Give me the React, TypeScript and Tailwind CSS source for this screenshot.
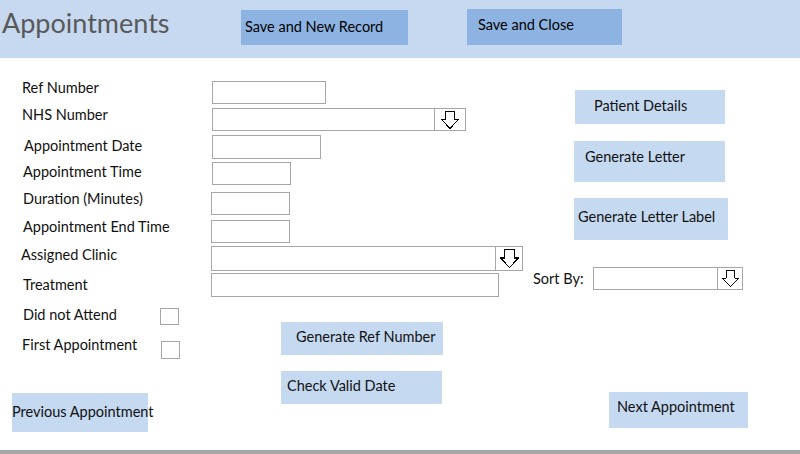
import React from 'react';

function Arrow({ size }: { size: number }) {
  return (
    <svg width={size} height={size} viewBox="0 0 18 18" className="block">
      <polygon
        points="4.5,0.5 13.5,0.5 13.5,8.5 17.5,8.5 9,17.5 0.5,8.5 4.5,8.5"
        fill="white"
        stroke="black"
        strokeWidth="1"
        shapeRendering="crispEdges"
      />
    </svg>
  );
}

function Field({ className }: { className: string }) {
  return <div className={'border border-[#a6a6a6] bg-white ' + className} />;
}

function Combo({ className, arrowBox, arrowSize }: { className: string; arrowBox: string; arrowSize: number }) {
  return (
    <div className={'flex border border-[#a6a6a6] bg-white ' + className}>
      <div className="flex-1" />
      <div className={'flex items-center justify-center border-l border-[#a6a6a6] ' + arrowBox}>
        <Arrow size={arrowSize} />
      </div>
    </div>
  );
}

export default function App() {
  return (
    <div className="flex h-[454px] w-[800px] flex-col overflow-hidden bg-white font-['Lato','Liberation_Sans',sans-serif] text-[14.5px] text-[#111]">
      {/* header */}
      <div className="flex h-[58px] shrink-0 items-start bg-[#c6d9f0]">
        <div className="mt-[6px] w-[241px] pl-[2px] text-[27px] leading-[34px] text-[#595959]">Appointments</div>
        <div className="mt-[10px] h-[35px] w-[167px] whitespace-nowrap bg-[#8db3e2] pl-[4px] pt-[8px] leading-[18px] text-black">
          Save and New Record
        </div>
        <div className="ml-[59px] mt-[9px] h-[36px] w-[155px] bg-[#8db3e2] pl-[11px] pt-[7px] leading-[18px] text-black">
          Save and Close
        </div>
      </div>

      {/* body */}
      <div className="flex flex-1 leading-[18px]">
        <div className="flex w-[530px] flex-col pt-[21px]">
          <div className="flex h-[27px]">
            <div className="w-[212px] pl-[22px]">Ref Number</div>
            <Field className="mt-[2px] h-[23px] w-[114px]" />
          </div>
          <div className="flex h-[29px]">
            <div className="w-[212px] pl-[22px]">NHS Number</div>
            <Combo className="mt-[2px] h-[23px] w-[254px]" arrowBox="w-[31px]" arrowSize={18} />
          </div>
          <div className="flex h-[27px]">
            <div className="mt-[2px] w-[212px] pl-[24px]">Appointment Date</div>
            <Field className="h-[24px] w-[109px]" />
          </div>
          <div className="flex h-[28px]">
            <div className="mt-[1px] w-[212px] pl-[23px]">Appointment Time</div>
            <Field className="h-[23px] w-[79px]" />
          </div>
          <div className="flex h-[28px]">
            <div className="w-[211px] pl-[23px]">Duration (Minutes)</div>
            <Field className="mt-[2px] h-[23px] w-[79px]" />
          </div>
          <div className="flex h-[28px]">
            <div className="w-[211px] pl-[23px]">Appointment End Time</div>
            <Field className="mt-[2px] h-[23px] w-[79px]" />
          </div>
          <div className="flex h-[27px]">
            <div className="w-[211px] pl-[21px]">Assigned Clinic</div>
            <Combo className="h-[25px] w-[312px]" arrowBox="w-[27px]" arrowSize={19} />
          </div>
          <div className="flex h-[33px]">
            <div className="mt-[3px] w-[211px] pl-[23px]">Treatment</div>
            <Field className="h-[24px] w-[288px]" />
          </div>

          <div className="flex">
            <div className="flex w-[281px] flex-col">
              <div className="flex h-[30px]">
                <div className="w-[160px] pl-[23px]">Did not Attend</div>
                <Field className="mt-[2px] h-[17px] w-[19px]" />
              </div>
              <div className="flex h-[57px]">
                <div className="w-[161px] pl-[22px]">First Appointment</div>
                <Field className="mt-[5px] h-[18px] w-[19px]" />
              </div>
              <div className="ml-[12px] h-[39px] w-[136px] whitespace-nowrap bg-[#c5d9f1] pt-[10px]">
                Previous Appointment
              </div>
            </div>
            <div className="flex flex-col">
              <div className="mt-[16px] h-[33px] w-[162px] whitespace-nowrap bg-[#c5d9f1] pl-[15px] pt-[6px]">Generate Ref Number</div>
              <div className="mt-[16px] h-[33px] w-[161px] bg-[#c5d9f1] pl-[6px] pt-[6px]">Check Valid Date</div>
            </div>
          </div>
        </div>

        <div className="flex flex-1 flex-col">
          <div className="ml-[45px] mt-[32px] h-[34px] w-[150px] bg-[#c5d9f1] pl-[19px] pt-[7px]">Patient Details</div>
          <div className="ml-[44px] mt-[17px] h-[41px] w-[151px] bg-[#c5d9f1] pl-[11px] pt-[7px]">Generate Letter</div>
          <div className="ml-[44px] mt-[16px] h-[42px] w-[154px] whitespace-nowrap bg-[#c5d9f1] pl-[4px] pt-[10px]">Generate Letter Label</div>
          <div className="mt-[27px] flex">
            <div className="ml-[3px] mt-[3px] w-[60px]">Sort By:</div>
            <Combo className="h-[23px] w-[150px]" arrowBox="w-[25px]" arrowSize={17} />
          </div>
          <div className="ml-[79px] mt-[102px] h-[36px] w-[139px] bg-[#c5d9f1] pl-[8px] pt-[6px]">Next Appointment</div>
        </div>
      </div>

      <div className="h-[4px] shrink-0 bg-[#a6a6a6]" />
    </div>
  );
}
